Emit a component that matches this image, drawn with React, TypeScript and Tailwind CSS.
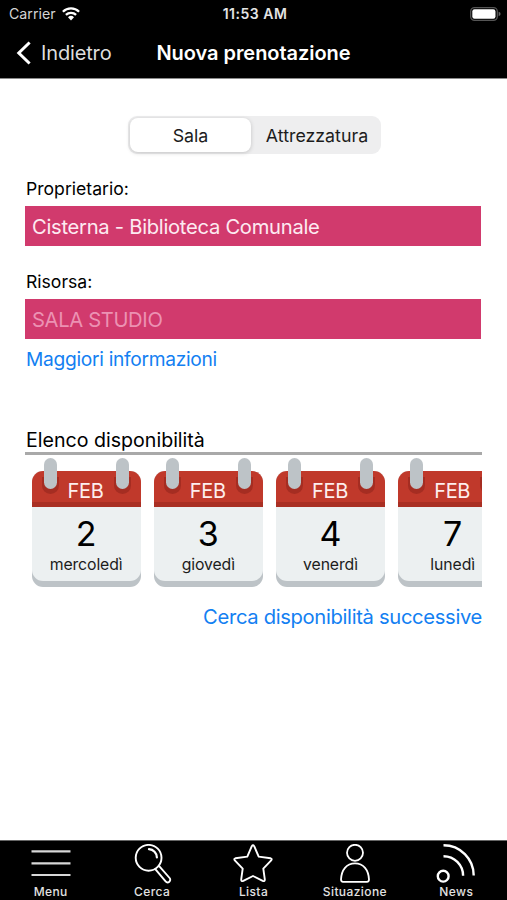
// "Nuova prenotazione" screen: resource picker, availability strip and bottom tab bar
import { useState } from 'react';

interface Day {
  month: string;
  day: number;
  weekday: string;
}

interface Tab {
  label: string;
  icon: React.ReactNode;
}

const days: Day[] = [
  { month: 'FEB', day: 2, weekday: 'mercoledì' },
  { month: 'FEB', day: 3, weekday: 'giovedì' },
  { month: 'FEB', day: 4, weekday: 'venerdì' },
  { month: 'FEB', day: 7, weekday: 'lunedì' },
];

const tabs: Tab[] = [
  {
    label: 'Menu',
    icon: (
      <svg viewBox="0 0 40 40" fill="none" stroke="currentColor" strokeWidth="2.2" className="h-10 w-10 text-[#d8d8d8]">
        <path d="M0.5 7.4h39M0.5 19.4h39M0.5 31h39" />
      </svg>
    ),
  },
  {
    label: 'Cerca',
    icon: (
      <svg viewBox="0 0 40 40" fill="none" stroke="currentColor" strokeWidth="1.9" strokeLinecap="round" strokeLinejoin="round" className="h-10 w-10">
        <circle cx="16.6" cy="13.8" r="12.9" />
        <path d="M17 5.2a8.4 8.4 0 0 1 7.9 8.2" strokeWidth="2.2" />
        <path d="M23.3 25.2L33.6 37.4A2.3 2.3 0 0 0 37.6 34L27.2 22.2" />
      </svg>
    ),
  },
  {
    label: 'Lista',
    icon: (
      <svg viewBox="0 0 40 40" fill="none" stroke="currentColor" strokeWidth="1.9" strokeLinecap="round" strokeLinejoin="round" className="h-10 w-10">
        <path d="M18.8 2.2Q20 0.4 21.2 2.2L25.7 12.6L37.6 14.3Q39.4 14.8 38.2 16.4L30.3 24.6L31.8 35.4Q31.8 37.8 29.7 36.9L20 32L10.3 36.9Q8.2 37.8 8.2 35.4L9.7 24.6L1.8 16.4Q0.6 14.8 2.4 14.3L14.3 12.6Z" />
      </svg>
    ),
  },
  {
    label: 'Situazione',
    icon: (
      <svg viewBox="0 0 40 40" fill="none" stroke="currentColor" strokeWidth="1.8" strokeLinejoin="round" className="h-10 w-10">
        <circle cx="20" cy="8.8" r="8" />
        <path d="M8 37.8Q6 37.8 6 35.6C6.4 25.9 11.5 19.4 20 19.4S33.6 25.9 34 35.6Q34 37.8 32 37.8Z" />
      </svg>
    ),
  },
  {
    label: 'News',
    icon: (
      <svg viewBox="0 0 40 40" fill="none" stroke="currentColor" strokeWidth="2.4" className="h-10 w-10">
        <circle cx="7.2" cy="32.2" r="5.4" />
        <path d="M7.5 1.2A30.2 30.2 0 0 1 37.7 31.4" />
        <path d="M7.5 12.2A19.6 19.6 0 0 1 27.1 31.8" />
      </svg>
    ),
  },
];

function StatusBar() {
  return (
    <div className="grid h-7 grid-cols-3 items-center pl-[9px] pr-[6px] leading-none">
      <div className="flex items-center gap-[6px]">
        <span className="text-[14.2px] text-[#d4d4d4]">Carrier</span>
        <svg viewBox="0 0 18 14" fill="none" stroke="currentColor" strokeWidth="2.3" className="mb-px h-[14px] w-[18px]">
          <path d="M0.9 4.7A11.6 11.6 0 0 1 17.1 4.7" />
          <path d="M3.9 7.9A7.3 7.3 0 0 1 14.1 7.9" />
          <path d="M6 10.3A4.3 4.3 0 0 1 12 10.3L9 13.5Z" fill="currentColor" stroke="none" />
        </svg>
      </div>
      <span className="pb-px text-center text-[14px] font-semibold tracking-[0.5px] text-[#e4e4e4]">11:53 AM</span>
      <svg viewBox="0 0 31 14" className="mb-px h-[14px] w-[31px] justify-self-end">
        <rect x="0.7" y="0.7" width="26.6" height="12.6" rx="3.8" fill="none" stroke="#555" strokeWidth="1.3" />
        <rect x="2.3" y="2.3" width="23.2" height="9.4" rx="2.2" fill="#fff" />
        <path d="M28.6 4.8Q30.6 5.4 30.6 7T28.6 9.2Z" fill="#666" />
      </svg>
    </div>
  );
}

function NavBar() {
  return (
    <div className="grid h-[49px] grid-cols-[1fr_auto_1fr] items-center">
      <button className="flex items-center gap-[9px] pl-4 text-[20px] tracking-[-0.15px] text-[#dedede]">
        <svg viewBox="0 0 16 24" fill="none" stroke="#fff" strokeWidth="3" className="h-6 w-4">
          <path d="M13.6 1.5L2.8 12l10.8 10.5" />
        </svg>
        <span>Indietro</span>
      </button>
      <h1 className="text-[20px] font-semibold tracking-[-0.05px]">Nuova prenotazione</h1>
    </div>
  );
}

function CalendarDay({ month, day, weekday }: Day) {
  return (
    <div className="relative h-[130px] w-[109px] shrink-0 pt-[13px]">
      <div className="h-[116px] overflow-hidden rounded-[11px] bg-[#bdc3c7]">
        <div className="h-[110px] overflow-hidden rounded-b-[11px] bg-[#ecf0f1] text-center">
          <div className="flex h-[36px] items-center justify-center border-b-[5px] border-[#a92f23] bg-[#c0392b] pr-px pt-[8px] text-[20px] tracking-[-0.3px] text-[#fdeeee]">
            {month}
          </div>
          <div className="pt-[7px] text-[34px] leading-10">{day}</div>
          <div className="pt-px text-[15.8px] leading-5 tracking-[-0.1px] text-[#1c1c1c]">{weekday}</div>
        </div>
      </div>
      {/* binder rings */}
      <span className="absolute left-[10px] top-[19px] h-[17px] w-[17px] rounded-b-full bg-[#a52d22]" />
      <span className="absolute right-[10px] top-[19px] h-[17px] w-[17px] rounded-b-full bg-[#a52d22]" />
      <span className="absolute left-3 top-0 h-[31px] w-[13px] rounded-full bg-[#bdc3c7]" />
      <span className="absolute right-3 top-0 h-[31px] w-[13px] rounded-full bg-[#bdc3c7]" />
    </div>
  );
}

export default function App() {
  const [kind, setKind] = useState('Sala');

  return (
    <div className="flex h-[900px] w-[507px] flex-col overflow-hidden bg-white font-['Inter','Liberation_Sans',sans-serif] text-black">
      <header className="h-[79px] shrink-0 border-b border-[#8a8a8a] bg-black text-white">
        <StatusBar />
        <NavBar />
      </header>

      <main className="flex flex-1 flex-col pl-[25px] pr-[26px] pt-[37px]">
        <div className="ml-[103px] flex h-[38px] w-[253px] rounded-[9px] bg-[#eeeeef] p-[2px] text-[17.8px] text-[#1c1c1c]">
          {['Sala', 'Attrezzatura'].map((name) => (
            <button
              key={name}
              onClick={() => setKind(name)}
              className={`${name === 'Sala' ? 'w-[121px]' : 'flex-1 pl-1'} rounded-lg pt-[2px] ${kind === name ? 'bg-white shadow-[0_1px_4px_rgba(0,0,0,0.18)]' : ''}`}
            >
              {name}
            </button>
          ))}
        </div>

        <label className="mt-[23px] h-[29px] pl-px text-[17.6px] leading-6">Proprietario:</label>
        <div className="flex h-10 items-center bg-[#d13a6d] px-[7px] pt-[2px] text-[20.2px] tracking-[-0.28px] text-[#fdeaf1]">
          Cisterna - Biblioteca Comunale
        </div>

        <label className="mt-6 h-[29px] pl-px text-[17.6px] leading-6">Risorsa:</label>
        <div className="flex h-10 items-center bg-[#d13a6d] px-[7px] pt-[2px] text-[20.2px] tracking-[-0.35px] text-[#ec92b3]">
          SALA STUDIO
        </div>
        <a className="mt-2 self-start pl-px text-[19.2px] leading-6 tracking-[-0.3px] text-[#1380f2]">Maggiori informazioni</a>

        <h2 className="mt-[57px] h-[24px] pl-px text-[19.6px] leading-6">Elenco disponibilità</h2>
        <div className="-mr-px h-[3px] bg-[#a9a9a9]" />
        <div className="-mr-px mt-[3px] flex gap-[13.2px] overflow-hidden pl-[6.6px]">
          {days.map((d) => (
            <CalendarDay key={d.day} {...d} />
          ))}
        </div>
        <a className="-mr-px mt-[15px] self-end text-[20.2px] leading-7 tracking-[-0.33px] text-[#1380f2]">Cerca disponibilità successive</a>
      </main>

      <nav className="grid h-[60px] shrink-0 grid-cols-5 border-t border-[#666] bg-black text-white">
        {tabs.map((tab) => (
          <button key={tab.label} className="flex flex-col items-center pt-[3px]">
            {tab.icon}
            <span className="text-[12px] font-medium leading-[15px] tracking-[0.4px] text-[#e2e2e2]">{tab.label}</span>
          </button>
        ))}
      </nav>
    </div>
  );
}
